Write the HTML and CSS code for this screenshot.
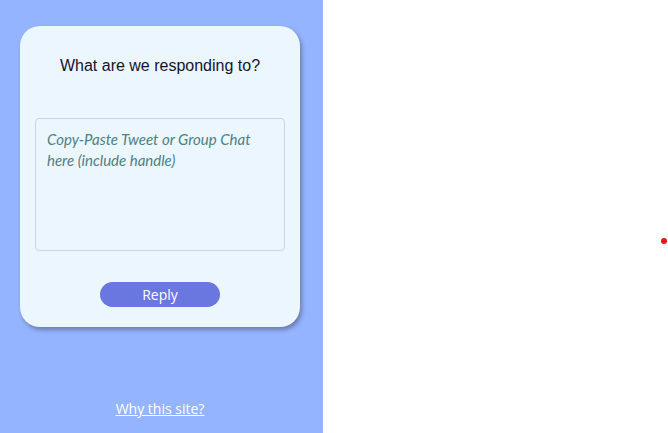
FILE: index.html
```html
<!DOCTYPE html>
<html>
<head>
<meta charset="utf-8">
<link rel="stylesheet" href="styles.css">
</head>
<body>
<div class="page">
  <aside class="panel">
    <div class="card">
      <h1 class="title">What are we responding to?</h1>
      <textarea class="input" placeholder="Copy-Paste Tweet or Group Chat here (include handle)"></textarea>
      <button class="reply">Reply</button>
    </div>
    <a class="why" href="#">Why this site?</a>
  </aside>
  <main class="canvas">
    <span class="dot"></span>
  </main>
</div>
</body>
</html>
```
FILE: styles.css
```css
html, body {
  margin: 0;
  padding: 0;
  background: #ffffff;
}
.page {
  display: flex;
  width: 668px;
  height: 433px;
}
.panel {
  width: 323px;
  height: 433px;
  background: #95b4ff;
  display: flex;
  flex-direction: column;
  align-items: center;
}
.card {
  margin-top: 26px;
  margin-left: -3px;
  width: 280px;
  box-sizing: border-box;
  padding: 30px 15px 20px;
  background: #ecf6ff;
  border-radius: 20px;
  box-shadow: 2px 3px 4px rgba(60, 60, 80, 0.45);
  display: flex;
  flex-direction: column;
  align-items: center;
}
.title {
  margin: 0;
  font-family: "Liberation Sans", Arial, sans-serif;
  font-weight: normal;
  font-size: 16px;
  line-height: 20px;
  color: #141432;
}
.input {
  margin-top: 42px;
  width: 250px;
  height: 133px;
  box-sizing: border-box;
  padding: 10px 11px;
  border: 1px solid #c9d4e2;
  border-radius: 4px;
  background: #ecf6ff;
  resize: none;
  font-family: Lato, sans-serif;
  font-style: italic;
  font-size: 15px;
  line-height: 21px;
  color: #333;
}
.input::placeholder {
  color: #4f8082;
  opacity: 1;
}
.reply {
  margin-top: 31px;
  width: 120px;
  height: 25px;
  border: none;
  border-radius: 13px;
  background: #6b77e1;
  color: #ffffff;
  font-family: "Open Sans", sans-serif;
  font-size: 14px;
  padding: 0;
}
.why {
  margin-top: 73px;
  margin-left: -3px;
  font-family: "Open Sans", sans-serif;
  font-size: 14px;
  line-height: 18px;
  color: #ffffff;
  text-decoration: underline;
}
.canvas {
  position: relative;
  flex: 1;
}
.dot {
  position: absolute;
  left: 338px;
  top: 238px;
  width: 6px;
  height: 6px;
  border-radius: 50%;
  background: #e81616;
}
```
